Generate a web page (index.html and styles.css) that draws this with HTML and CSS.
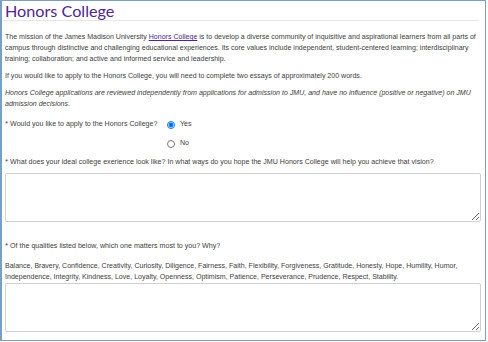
FILE: index.html
```html
<!DOCTYPE html>
<html lang="en">
<head>
  <meta charset="UTF-8">
  <meta name="viewport" content="width=device-width, initial-scale=1.0">
  <title>Honors College</title>
  <link rel="stylesheet" href="styles.css">
</head>
<body>

<div class="frame">
  <h1 class="title">Honors College</h1>

  <p>The mission of the James Madison University <a href="#honors">Honors College</a> is to develop a diverse community of inquisitive and aspirational learners from all parts of campus through distinctive and challenging educational experiences. Its core values include independent, student-centered learning; interdisciplinary training; collaboration; and active and informed service and leadership.</p>
  <p>If you would like to apply to the Honors College, you will need to complete two essays of approximately 200 words.</p>
  <p class="note">Honors College applications are reviewed independently from applications for admission to JMU, and have no influence (positive or negative) on JMU admission decisions.</p>

  <form class="essay-form">
    <div class="form-row">
      <label class="question"><span class="req">*</span> Would you like to apply to the Honors College?</label>
      <div class="choices">
        <label class="choice"><input type="radio" name="apply" checked> Yes</label>
        <label class="choice"><input type="radio" name="apply"> No</label>
      </div>
    </div>

    <div class="form-group">
      <label class="question" for="vision"><span class="req">*</span> What does your ideal college exerience look like? In what ways do you hope the JMU Honors College will help you achieve that vision?</label>
      <textarea id="vision"></textarea>
    </div>

    <div class="form-group second">
      <label class="question" for="quality"><span class="req">*</span> Of the qualities listed below, which one matters most to you? Why?</label>
      <p class="qualities">Balance, Bravery, Confidence, Creativity, Curiosity, Diligence, Fairness, Faith, Flexibility, Forgiveness, Gratitude, Honesty, Hope, Humility, Humor, Independence, Integrity, Kindness, Love, Loyalty, Openness, Optimism, Patience, Perseverance, Prudence, Respect, Stability.</p>
      <textarea id="quality"></textarea>
    </div>
  </form>
</div>

</body>
</html>
```

FILE: styles.css
```css
body {
  margin: 0;
  padding: 0;
  font-family: "Liberation Sans", Arial, sans-serif;
  background-color: white;
}

.frame {
  box-sizing: border-box;
  width: 486px;
  height: 341px;
  border: 1px solid #7b9fbf;
  border-left-width: 2px;
  padding: 0 6px 0 1px;
  color: #404040;
  font-size: 7.05px;
  line-height: 11px;
  overflow: hidden;
}

.title {
  margin: 0;
  padding: 1px 0 1px 2px;
  font-family: Lato, sans-serif;
  font-size: 16.2px;
  line-height: 17px;
  font-weight: normal;
  color: #4f2596;
  border-bottom: 1px solid #e6e6e6;
}

p {
  margin: 0 0 6px 0;
  padding-left: 2px;
}

.frame > p:first-of-type {
  margin-top: 10px;
}

a {
  color: #4f2596;
}

.note {
  font-style: italic;
}

.essay-form {
  margin-top: 9px;
}

.question {
  display: block;
  padding-left: 2px;
  font-size: 7.1px;
}

.req {
  color: #5a2ca0;
  font-size: 8px;
}

.form-row {
  display: flex;
}

.form-row .question {
  width: 162px;
}

.choices {
  display: flex;
  flex-direction: column;
  gap: 8px;
  padding-top: 1px;
}

.choice {
  display: flex;
  align-items: center;
  gap: 5px;
  font-size: 7.1px;
}

.choice input {
  margin: 0;
  width: 8px;
  height: 8px;
}

.form-group {
  margin-top: 7px;
}

.form-group textarea {
  display: block;
  box-sizing: border-box;
  width: 476px;
  height: 49px;
  margin: 5px 0 0 2px;
  border: 1px solid #d0d0d0;
  border-radius: 2px;
  resize: vertical;
}

.second {
  margin-top: 18px;
}

.qualities {
  margin: 8px 0 0 0;
}

.second textarea {
  margin-top: 1px;
}
```
